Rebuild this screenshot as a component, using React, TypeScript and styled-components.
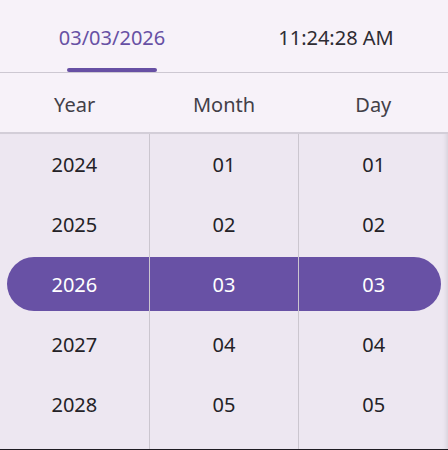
import React from 'react';
import styled, { createGlobalStyle } from 'styled-components';

const GlobalStyle = createGlobalStyle`
  html, body {
    margin: 0;
    padding: 0;
    background: #f7f2f9;
  }
  body {
    font-family: "Noto Sans", "Open Sans", sans-serif;
  }
`;

const Page = styled.div`
  width: 448px;
  height: 450px;
  background: #f7f2f9;
  display: flex;
  flex-direction: column;
  overflow: hidden;
  border-bottom: 1px solid #1e1b22;
  box-sizing: border-box;
`;

const TabBar = styled.div`
  height: 73px;
  display: flex;
  border-bottom: 1px solid #cdc8d2;
  box-sizing: border-box;
`;

const Tab = styled.div<{ $active?: boolean }>`
  flex: 1;
  position: relative;
  display: flex;
  align-items: flex-start;
  justify-content: center;
  padding-top: 24px;
  font-size: 20px;
  color: ${(p) => (p.$active ? '#6750a4' : '#2e2c33')};
`;

const Indicator = styled.span`
  position: absolute;
  bottom: 0;
  left: 50%;
  transform: translateX(-50%);
  width: 90px;
  height: 4px;
  border-radius: 2px;
  background: #6750a4;
`;

const HeaderRow = styled.div`
  height: 61px;
  display: flex;
  border-bottom: 2px solid #d3ced8;
  box-sizing: border-box;
`;

const HeaderCell = styled.div`
  flex: 1;
  display: flex;
  align-items: center;
  justify-content: center;
  padding-top: 3px;
  font-size: 20px;
  color: #433f48;
`;

const Wheels = styled.div`
  flex: 1;
  display: flex;
  background: #ede7f1;
  box-shadow: inset -5px 0 5px -4px rgba(0, 0, 0, 0.12);
`;

const Wheel = styled.div<{ $last?: boolean }>`
  flex: 1;
  display: flex;
  flex-direction: column;
  border-right: ${(p) => (p.$last ? 'none' : '1px solid #cbc6cf')};
`;

const Item = styled.div<{ $selected?: boolean; $edge?: 'left' | 'right' }>`
  height: 60px;
  display: flex;
  align-items: center;
  justify-content: center;
  font-size: 20px;
  color: #242227;
  ${(p) =>
    p.$selected &&
    `
    height: 54px;
    margin: 3px 0;
    background: #6851a5;
    color: #ffffff;
  `}
  ${(p) =>
    p.$selected &&
    p.$edge === 'left' &&
    `
    margin-left: 7px;
    padding-right: 7px;
    border-radius: 27px 0 0 27px;
  `}
  ${(p) =>
    p.$selected &&
    p.$edge === 'right' &&
    `
    margin-right: 7px;
    padding-left: 7px;
    border-radius: 0 27px 27px 0;
  `}
`;

const columns = [
  { label: 'Year', values: ['2024', '2025', '2026', '2027', '2028'] },
  { label: 'Month', values: ['01', '02', '03', '04', '05'] },
  { label: 'Day', values: ['01', '02', '03', '04', '05'] },
];

const App: React.FC = () => {
  return (
    <>
      <GlobalStyle />
      <Page>
        <TabBar>
          <Tab $active>
            03/03/2026
            <Indicator />
          </Tab>
          <Tab>11:24:28 AM</Tab>
        </TabBar>
        <HeaderRow>
          {columns.map((c) => (
            <HeaderCell key={c.label}>{c.label}</HeaderCell>
          ))}
        </HeaderRow>
        <Wheels>
          {columns.map((c, ci) => (
            <Wheel key={c.label} $last={ci === columns.length - 1}>
              {c.values.map((v, i) => (
                <Item
                  key={v}
                  $selected={i === 2}
                  $edge={ci === 0 ? 'left' : ci === columns.length - 1 ? 'right' : undefined}
                >
                  {v}
                </Item>
              ))}
            </Wheel>
          ))}
        </Wheels>
      </Page>
    </>
  );
};

export default App;
